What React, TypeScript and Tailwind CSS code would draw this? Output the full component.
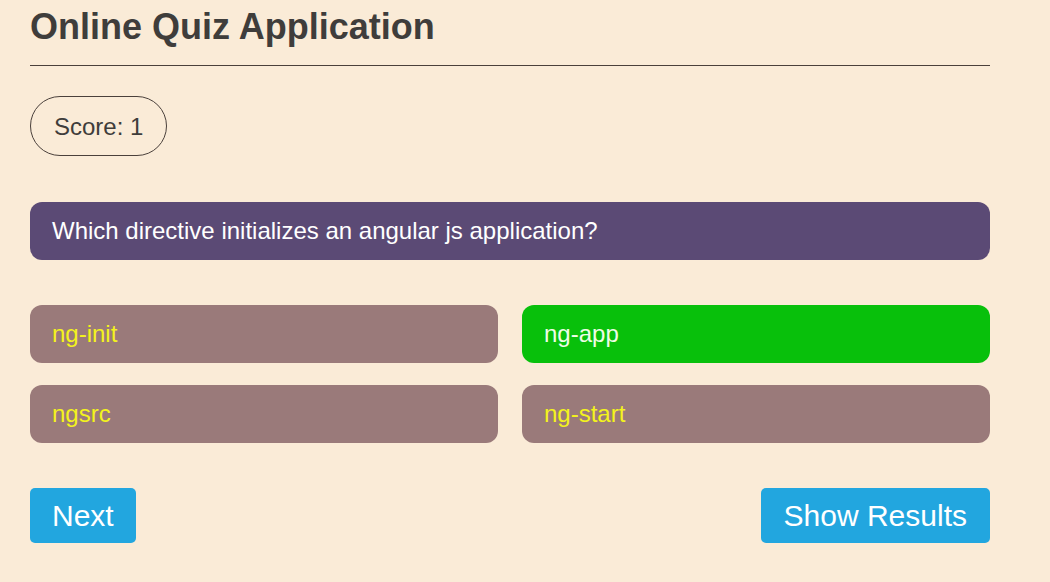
import React from "react";

const options = [
  { label: "ng-init", correct: false },
  { label: "ng-app", correct: true },
  { label: "ngsrc", correct: false },
  { label: "ng-start", correct: false },
];

export default function App() {
  return (
    <div
      className="min-h-[582px] w-full bg-[#faebd7]"
      style={{ fontFamily: '"Liberation Sans", Arial, sans-serif' }}
    >
      <div className="ml-[30px] w-[960px] pt-[6px]">
        <h1 className="text-[36px] leading-[42px] font-bold text-[#3f3d3b]">
          Online Quiz Application
        </h1>
        <div className="mt-[17px] h-px w-full bg-[#4a403b]" />

        <div className="mt-[30px] flex">
          <div className="flex h-[60px] items-center rounded-full border border-[#4a403b] px-[23px] text-[24px] leading-[27px] text-[#3f3d3b]">
            Score: 1
          </div>
        </div>

        <div className="mt-[46px] rounded-[12px] bg-[#5b4a75] px-[22px] py-[15px] text-[24px] leading-[28px] text-white">
          Which directive initializes an angular js application?
        </div>

        <div className="mt-[45px] grid grid-cols-2 gap-x-[24px] gap-y-[22px]">
          {options.map((o) => (
            <div
              key={o.label}
              className={
                o.correct
                  ? "rounded-[12px] bg-[#08c00b] px-[22px] py-[15px] text-[24px] leading-[28px] text-[#effde6]"
                  : "rounded-[12px] bg-[#9a7a7a] px-[22px] py-[15px] text-[24px] leading-[28px] text-[#f3f31c]"
              }
            >
              {o.label}
            </div>
          ))}
        </div>

        <div className="mt-[45px] flex items-start justify-between">
          <button className="rounded-[5px] bg-[#22a6df] px-[22px] py-[10px] text-[30px] leading-[35px] text-white">
            Next
          </button>
          <button className="rounded-[5px] bg-[#22a6df] px-[23px] py-[10px] text-[30px] leading-[35px] text-white">
            Show Results
          </button>
        </div>
      </div>
    </div>
  );
}
